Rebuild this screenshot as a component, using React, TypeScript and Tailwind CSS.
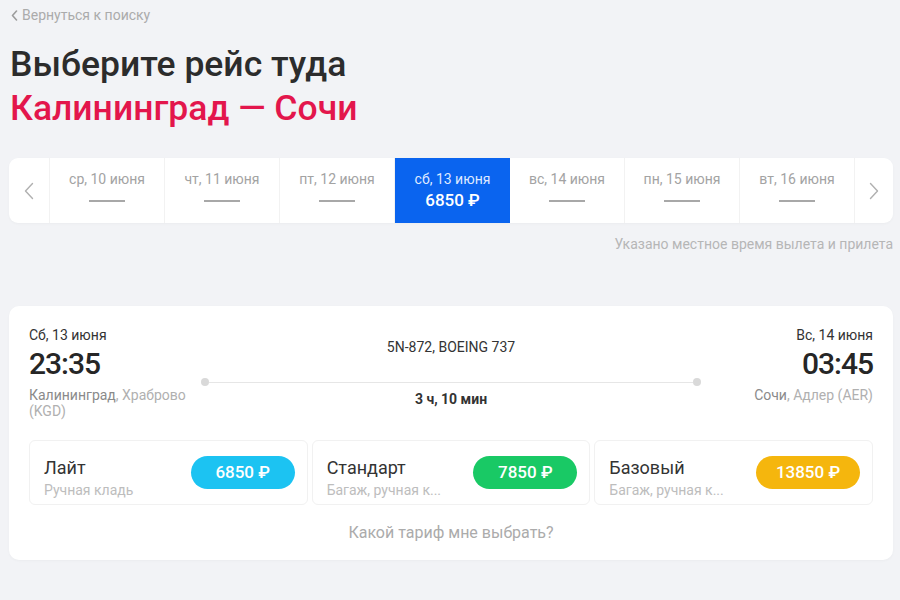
import React from "react";

const days = [
  "ср, 10 июня",
  "чт, 11 июня",
  "пт, 12 июня",
  "сб, 13 июня",
  "вс, 14 июня",
  "пн, 15 июня",
  "вт, 16 июня",
];

const tariffs = [
  { name: "Лайт", sub: "Ручная кладь", price: "6850 ₽", color: "bg-[#1cc3f2]" },
  { name: "Стандарт", sub: "Багаж, ручная к...", price: "7850 ₽", color: "bg-[#19c965]" },
  { name: "Базовый", sub: "Багаж, ручная к...", price: "13850 ₽", color: "bg-[#f5b60d]" },
];

function Chevron({ dir }: { dir: "left" | "right" }) {
  return (
    <svg width="10" height="18" viewBox="0 0 10 18" fill="none">
      {dir === "left" ? (
        <path d="M8.5 1.5 L1.5 9 L8.5 16.5" stroke="#b0b0b0" strokeWidth="1.4" strokeLinecap="round" strokeLinejoin="round" />
      ) : (
        <path d="M1.5 1.5 L8.5 9 L1.5 16.5" stroke="#b0b0b0" strokeWidth="1.4" strokeLinecap="round" strokeLinejoin="round" />
      )}
    </svg>
  );
}

export default function App() {
  return (
    <div
      className="w-[900px] h-[600px] overflow-hidden bg-[#f2f3f6] pl-[9px] pr-[7px]"
      style={{ fontFamily: "Roboto, 'Noto Sans', sans-serif" }}
    >
      {/* back link */}
      <div className="flex items-center gap-[4px] pt-[6px] pl-[2px] h-[24px] text-[14px] text-[#ababab]">
        <svg width="7" height="11" viewBox="0 0 7 11" fill="none">
          <path d="M5.5 1 L1.5 5.5 L5.5 10" stroke="#9c9c9c" strokeWidth="1.6" strokeLinecap="round" strokeLinejoin="round" />
        </svg>
        <span>Вернуться к поиску</span>
      </div>

      {/* title */}
      <div className="mt-[18px] pl-[1px] text-[35.5px] leading-[44px] font-medium">
        <div className="text-[#2c2c2c]">Выберите рейс туда</div>
        <div className="text-[#e3164c]">Калининград — Сочи</div>
      </div>

      {/* date strip */}
      <div className="mt-[28px] h-[65px] bg-white rounded-[9px] flex overflow-hidden shadow-[0_1px_3px_rgba(0,0,0,0.03)]">
        <div className="w-[41px] flex items-center justify-center border-r border-[#f2f2f2]">
          <Chevron dir="left" />
        </div>
        {days.map((d, i) =>
          i === 3 ? (
            <div key={d} className="w-[115px] bg-[#0a64ef] flex flex-col items-center pt-[12px]">
              <div className="text-[14px] leading-[18px] text-[#dfe9ff]">{d}</div>
              <div className="text-[17px] leading-[22px] font-medium text-white mt-[1px]">6850 ₽</div>
            </div>
          ) : (
            <div key={d} className="w-[115px] flex flex-col items-center pt-[12px] border-r border-[#f2f2f2]">
              <div className="text-[14px] leading-[18px] text-[#a3a3a3]">{d}</div>
              <div className="mt-[12px] w-[36px] h-[1.5px] bg-[#a8a8a8]" />
            </div>
          )
        )}
        <div className="flex-1 flex items-center justify-center">
          <Chevron dir="right" />
        </div>
      </div>

      <div className="mt-[12px] text-right text-[14px] leading-[18px] text-[#b6b6b6]">
        Указано местное время вылета и прилета
      </div>

      {/* flight card */}
      <div className="mt-[53px] h-[254px] bg-white rounded-[10px] pt-[20px] px-[20px] shadow-[0_1px_3px_rgba(0,0,0,0.03)]">
        <div className="grid grid-cols-[176px_1fr_176px]">
          <div className="flex flex-col">
            <div className="text-[14px] leading-[18px] text-[#333]">Сб, 13 июня</div>
            <div className="mt-[2px] text-[30px] leading-[36px] font-medium text-[#262626] tracking-[-1px]">23:35</div>
            <div className="mt-[5px] text-[14px] leading-[16px] text-[#b0b0b0] pr-[6px]">
              <span className="text-[#8a8a8a]">Калининград</span>, Храброво (KGD)
            </div>
          </div>
          <div className="flex flex-col items-center pt-[12px]">
            <div className="text-[14px] leading-[18px] text-[#333]">5N-872, BOEING 737</div>
            <div className="relative mt-[22px] w-full h-[8px] flex items-center">
              <div className="w-[8px] h-[8px] rounded-full bg-[#d9d9d9] -ml-[4px]" />
              <div className="flex-1 h-[1px] bg-[#e6e6e6]" />
              <div className="w-[8px] h-[8px] rounded-full bg-[#d9d9d9] -mr-[4px]" />
            </div>
            <div className="mt-[4px] text-[14px] leading-[18px] font-bold text-[#333]">3 ч, 10 мин</div>
          </div>
          <div className="flex flex-col items-end">
            <div className="text-[14px] leading-[18px] text-[#333]">Вс, 14 июня</div>
            <div className="mt-[2px] text-[30px] leading-[36px] font-medium text-[#262626] tracking-[-1px]">03:45</div>
            <div className="mt-[5px] text-[14px] leading-[16px] text-[#b0b0b0]">
              <span className="text-[#8a8a8a]">Сочи</span>, Адлер (AER)
            </div>
          </div>
        </div>

        <div className="mt-[21px] grid grid-cols-3 gap-[4px]">
          {tariffs.map((t) => (
            <div
              key={t.name}
              className="h-[65px] rounded-[6px] border border-[#f1f1f1] flex items-center justify-between pl-[14px] pr-[12px]"
            >
              <div className="flex flex-col mt-[10px]">
                <div className="text-[18px] leading-[22px] text-[#333]">{t.name}</div>
                <div className="text-[14px] leading-[18px] text-[#bdbdbd] mt-[2px]">{t.sub}</div>
              </div>
              <div
                className={`${t.color} w-[104px] h-[33px] rounded-full flex items-center justify-center text-white text-[17px] font-medium`}
              >
                {t.price}
              </div>
            </div>
          ))}
        </div>

        <div className="mt-[17px] text-center text-[16px] leading-[22px] text-[#ababab]">
          Какой тариф мне выбрать?
        </div>
      </div>
    </div>
  );
}
